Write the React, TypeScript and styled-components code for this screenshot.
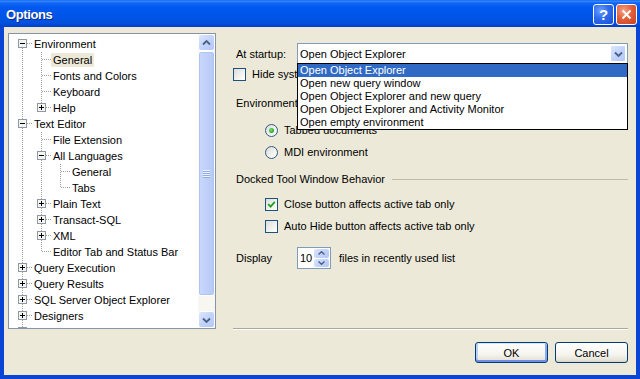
import React from "react";
import styled, { createGlobalStyle } from "styled-components";

const GlobalStyle = createGlobalStyle`
  html, body {
    margin: 0;
    padding: 0;
    background: #ece9d8;
  }
  body {
    font-family: "Liberation Sans", Arial, sans-serif;
    font-size: 11px;
    color: #000;
  }
`;

const Window = styled.div`
  width: 640px;
  height: 379px;
  display: flex;
  flex-direction: column;
  background: #ece9d8;
  overflow: hidden;
`;

const TitleBar = styled.div`
  height: 27px;
  flex-shrink: 0;
  display: flex;
  align-items: center;
  padding: 0 3px 0 6px;
  background: linear-gradient(
    to bottom,
    #0a5fe9 0%,
    #3a8cff 4%,
    #1468f5 10%,
    #0058ee 28%,
    #0055e8 60%,
    #0150de 85%,
    #0040c6 100%
  );
`;

const Title = styled.div`
  flex: 1;
  padding-top: 2px;
  color: #fff;
  font-weight: bold;
  font-size: 13px;
  letter-spacing: -0.4px;
  text-shadow: 1px 1px #0f2a8a;
`;

const CaptionButtons = styled.div`
  display: flex;
  gap: 2px;
  margin-top: 1px;
`;

const CaptionButton = styled.div<{ $variant: "help" | "close" }>`
  width: 21px;
  height: 21px;
  box-sizing: border-box;
  border: 1px solid #fff;
  border-radius: 3px;
  display: flex;
  align-items: center;
  justify-content: center;
  color: #fff;
  font-weight: bold;
  font-size: 15px;
  background: ${(p) =>
    p.$variant === "help"
      ? "radial-gradient(circle at 35% 30%, #6ea0ff 0%, #2e6cec 45%, #1a4fd6 100%)"
      : "radial-gradient(circle at 35% 30%, #f2a488 0%, #e2603a 45%, #c8401c 100%)"};
`;

const Client = styled.div`
  flex: 1;
  display: flex;
  padding: 6px 8px 12px 4px;
  border: 4px solid #0a46d6;
  border-top: 0;
`;

/* ---------- tree ---------- */

const TreeBox = styled.div`
  width: 208px;
  height: 296px;
  box-sizing: border-box;
  flex-shrink: 0;
  border: 1px solid #8595a8;
  background: #fff;
  display: flex;
`;

const TreeList = styled.div`
  flex: 1;
  padding: 2px 0 0 4px;
  overflow: hidden;
`;

const TreeRow = styled.div`
  display: flex;
  align-items: center;
  height: 16px;
  white-space: nowrap;
`;

const TreeLabel = styled.span<{ $selected?: boolean }>`
  height: 14px;
  line-height: 14px;
  padding: 0 2px;
  background: ${(p) => (p.$selected ? "#ece9d8" : "transparent")};
`;

const ScrollBar = styled.div`
  width: 17px;
  display: flex;
  flex-direction: column;
  background: #f7f6f1;
`;

const ScrollArrow = styled.div`
  height: 17px;
  box-sizing: border-box;
  border: 1px solid #fff;
  border-radius: 3px;
  display: flex;
  align-items: center;
  justify-content: center;
  background: linear-gradient(135deg, #dce6fd 0%, #c3d4fb 50%, #b3c7f5 100%);
`;

const ScrollThumb = styled.div`
  height: 245px;
  box-sizing: border-box;
  border: 1px solid #fff;
  border-radius: 3px;
  display: flex;
  align-items: center;
  justify-content: center;
  background: linear-gradient(to right, #c9d8fc 0%, #bfd0fa 50%, #b6c9f6 100%);
  box-shadow: inset 0 0 0 1px #b0c4f2;
`;

const Grip = styled.div`
  width: 7px;
  height: 8px;
  background: repeating-linear-gradient(
    to bottom,
    #eef3fe 0 1px,
    #8faae8 1px 2px
  );
`;

const ScrollTrack = styled.div`
  flex: 1;
`;

/* ---------- right side ---------- */

const Panel = styled.div`
  flex: 1;
  margin-left: 17px;
  display: flex;
  flex-direction: column;
`;

const FieldRow = styled.div<{ $top: number; $height?: number }>`
  display: flex;
  align-items: center;
  height: ${(p) => p.$height ?? 16}px;
  margin-top: ${(p) => p.$top}px;
`;

const FieldLabel = styled.div`
  width: 64px;
  box-sizing: border-box;
  padding-left: 3px;
  flex-shrink: 0;
`;

const OptionRow = styled.div<{ $top: number; $indent?: number }>`
  display: flex;
  align-items: center;
  gap: 6px;
  height: 16px;
  margin-top: ${(p) => p.$top}px;
  padding-left: ${(p) => p.$indent ?? 0}px;
  white-space: nowrap;
`;

const ComboBox = styled.div`
  position: relative;
  width: 331px;
  height: 21px;
  box-sizing: border-box;
  border: 1px solid #7f9db9;
  background: #fff;
  display: flex;
  align-items: center;
`;

const ComboText = styled.div`
  flex: 1;
  padding-left: 2px;
`;

const ComboArrow = styled.div`
  width: 16px;
  height: 17px;
  margin-right: 1px;
  box-sizing: border-box;
  border: 1px solid #fff;
  border-radius: 2px;
  display: flex;
  align-items: center;
  justify-content: center;
  background: linear-gradient(135deg, #dce6fd 0%, #c3d4fb 50%, #b3c7f5 100%);
`;

const DropList = styled.div`
  position: absolute;
  top: 19px;
  left: -1px;
  right: -1px;
  z-index: 5;
  border: 1px solid #000;
  background: #fff;
`;

const DropItem = styled.div<{ $active?: boolean }>`
  height: 13px;
  line-height: 13px;
  padding-left: 2px;
  background: ${(p) => (p.$active ? "#316ac5" : "#fff")};
  color: ${(p) => (p.$active ? "#fff" : "#000")};
`;

const CheckBox = styled.span`
  width: 13px;
  height: 13px;
  box-sizing: border-box;
  flex-shrink: 0;
  border: 1px solid #1c5180;
  display: flex;
  align-items: center;
  justify-content: center;
  background: linear-gradient(135deg, #dcdcd7 0%, #f6f6f3 70%, #fff 100%);
`;

const Radio = styled.span`
  width: 13px;
  height: 13px;
  box-sizing: border-box;
  flex-shrink: 0;
  border: 1px solid #2f5a86;
  border-radius: 50%;
  display: flex;
  align-items: center;
  justify-content: center;
  background: linear-gradient(135deg, #dcdcd7 0%, #f6f6f3 70%, #fff 100%);
`;

const RadioDot = styled.span`
  width: 5px;
  height: 5px;
  border-radius: 50%;
  background: radial-gradient(circle at 40% 40%, #7fdc7f 0%, #2fae2f 60%, #1f8f1f 100%);
`;

const GroupHeader = styled.div<{ $top: number }>`
  display: flex;
  align-items: center;
  height: 16px;
  margin-top: ${(p) => p.$top}px;
  padding-left: 3px;
  white-space: nowrap;
`;

const Rule = styled.div`
  flex: 1;
  height: 1px;
  margin-left: 7px;
  background: #bcbaad;
`;

const SpinBox = styled.div`
  width: 34px;
  height: 22px;
  box-sizing: border-box;
  border: 1px solid #7f9db9;
  background: #fff;
  display: flex;
`;

const SpinValue = styled.div`
  flex: 1;
  padding-left: 2px;
  line-height: 20px;
`;

const SpinButtons = styled.div`
  width: 15px;
  display: flex;
  flex-direction: column;
  gap: 1px;
  padding: 1px 1px 1px 0;
`;

const SpinButton = styled.div`
  flex: 1;
  border-radius: 2px;
  display: flex;
  align-items: center;
  justify-content: center;
  background: linear-gradient(135deg, #dce6fd 0%, #c3d4fb 50%, #b3c7f5 100%);
`;

const FilesText = styled.span`
  margin-left: 8px;
`;

const Spacer = styled.div`
  flex: 1;
`;

const Separator = styled.div`
  border-top: 1px solid #aca899;
  border-bottom: 1px solid #fff;
`;

const ButtonRow = styled.div`
  display: flex;
  justify-content: flex-end;
  gap: 7px;
  margin-top: 12px;
`;

const PushButton = styled.div<{ $default?: boolean }>`
  width: 73px;
  height: 21px;
  box-sizing: border-box;
  border: 1px solid #003c74;
  border-radius: 3px;
  display: flex;
  align-items: center;
  justify-content: center;
  background: linear-gradient(to bottom, #ffffff 0%, #f5f4ee 60%, #e6e3d8 90%, #d6d0c5 100%);
  box-shadow: ${(p) =>
    p.$default
      ? "inset 0 1px 0 #cee7ff, inset 0 -2px 0 #6f8ee6, inset 2px 0 0 #b8d0f9, inset -2px 0 0 #8ba9ee"
      : "none"};
`;

/* ---------- drawings ---------- */

const DOT = "#a0a0a0";

type Exp = "+" | "-" | undefined;

const Guide: React.FC<{ on: boolean }> = ({ on }) => (
  <svg width="19" height="16" style={{ flexShrink: 0 }}>
    {on && <line x1="9.5" y1="0" x2="9.5" y2="16" stroke={DOT} strokeDasharray="1 1" />}
  </svg>
);

const Connector: React.FC<{ top: boolean; bottom: boolean; exp: Exp }> = ({ top, bottom, exp }) => (
  <svg width="19" height="16" style={{ flexShrink: 0 }}>
    {top && <line x1="9.5" y1="0" x2="9.5" y2="8" stroke={DOT} strokeDasharray="1 1" />}
    {bottom && <line x1="9.5" y1="8" x2="9.5" y2="16" stroke={DOT} strokeDasharray="1 1" />}
    <line x1="10" y1="7.5" x2="19" y2="7.5" stroke={DOT} strokeDasharray="1 1" />
    {exp && (
      <>
        <rect x="5.5" y="3.5" width="8" height="8" fill="#f5f4ef" stroke="#8c9aa8" />
        <line x1="7" y1="7.5" x2="12" y2="7.5" stroke="#000" />
        {exp === "+" && <line x1="9.5" y1="5" x2="9.5" y2="10" stroke="#000" />}
      </>
    )}
  </svg>
);

const Chevron: React.FC<{ dir: "up" | "down"; w?: number }> = ({ dir, w = 8 }) => (
  <svg width={w + 1} height="6">
    <path
      d={dir === "up" ? `M1 4.5 L${(w + 1) / 2} 1 L${w} 4.5` : `M1 1.5 L${(w + 1) / 2} 5 L${w} 1.5`}
      fill="none"
      stroke="#4d6185"
      strokeWidth="1.8"
    />
  </svg>
);

const SmallArrow: React.FC<{ dir: "up" | "down" }> = ({ dir }) => (
  <svg width="7" height="4">
    <path
      d={dir === "up" ? "M0.5 3.5 L3.5 0.7 L6.5 3.5" : "M0.5 0.5 L3.5 3.3 L6.5 0.5"}
      fill="none"
      stroke="#4d6185"
      strokeWidth="1.4"
    />
  </svg>
);

const CheckMark = () => (
  <svg width="9" height="9">
    <path d="M1.2 4.2 L3.6 6.6 L7.8 1.8" fill="none" stroke="#21a121" strokeWidth="1.8" />
  </svg>
);

/* ---------- data ---------- */

type Node = {
  label: string;
  guides: boolean[];
  top: boolean;
  bottom: boolean;
  exp?: Exp;
  selected?: boolean;
};

const tree: Node[] = [
  { label: "Environment", guides: [], top: false, bottom: true, exp: "-" },
  { label: "General", guides: [true], top: true, bottom: true, selected: true },
  { label: "Fonts and Colors", guides: [true], top: true, bottom: true },
  { label: "Keyboard", guides: [true], top: true, bottom: true },
  { label: "Help", guides: [true], top: true, bottom: false, exp: "+" },
  { label: "Text Editor", guides: [], top: true, bottom: true, exp: "-" },
  { label: "File Extension", guides: [true], top: true, bottom: true },
  { label: "All Languages", guides: [true], top: true, bottom: true, exp: "-" },
  { label: "General", guides: [true, true], top: true, bottom: true },
  { label: "Tabs", guides: [true, true], top: true, bottom: false },
  { label: "Plain Text", guides: [true], top: true, bottom: true, exp: "+" },
  { label: "Transact-SQL", guides: [true], top: true, bottom: true, exp: "+" },
  { label: "XML", guides: [true], top: true, bottom: true, exp: "+" },
  { label: "Editor Tab and Status Bar", guides: [true], top: true, bottom: false },
  { label: "Query Execution", guides: [], top: true, bottom: true, exp: "+" },
  { label: "Query Results", guides: [], top: true, bottom: true, exp: "+" },
  { label: "SQL Server Object Explorer", guides: [], top: true, bottom: true, exp: "+" },
  { label: "Designers", guides: [], top: true, bottom: true, exp: "+" },
  { label: "Source Control", guides: [], top: true, bottom: true, exp: "+" },
];

const startupOptions = [
  "Open Object Explorer",
  "Open new query window",
  "Open Object Explorer and new query",
  "Open Object Explorer and Activity Monitor",
  "Open empty environment",
];

export default function App() {
  return (
    <>
      <GlobalStyle />
      <Window>
        <TitleBar>
          <Title>Options</Title>
          <CaptionButtons>
            <CaptionButton $variant="help">?</CaptionButton>
            <CaptionButton $variant="close">
              <svg width="11" height="11">
                <path d="M1.5 1.5 L9.5 9.5 M9.5 1.5 L1.5 9.5" stroke="#fff" strokeWidth="2" />
              </svg>
            </CaptionButton>
          </CaptionButtons>
        </TitleBar>

        <Client>
          <TreeBox>
            <TreeList>
              {tree.map((n, i) => (
                <TreeRow key={i}>
                  {n.guides.map((g, j) => (
                    <Guide key={j} on={g} />
                  ))}
                  <Connector top={n.top} bottom={n.bottom} exp={n.exp} />
                  <TreeLabel $selected={n.selected}>{n.label}</TreeLabel>
                </TreeRow>
              ))}
            </TreeList>
            <ScrollBar>
              <ScrollArrow>
                <Chevron dir="up" />
              </ScrollArrow>
              <ScrollThumb>
                <Grip />
              </ScrollThumb>
              <ScrollTrack />
              <ScrollArrow>
                <Chevron dir="down" />
              </ScrollArrow>
            </ScrollBar>
          </TreeBox>

          <Panel>
            <FieldRow $top={10} $height={21}>
              <FieldLabel>At startup:</FieldLabel>
              <ComboBox>
                <ComboText>Open Object Explorer</ComboText>
                <ComboArrow>
                  <Chevron dir="down" />
                </ComboArrow>
                <DropList>
                  {startupOptions.map((o, i) => (
                    <DropItem key={o} $active={i === 0}>
                      {o}
                    </DropItem>
                  ))}
                </DropList>
              </ComboBox>
            </FieldRow>

            <OptionRow $top={2}>
              <CheckBox />
              <span>Hide system objects in Object Explorer</span>
            </OptionRow>

            <GroupHeader $top={13}>
              Environment layout
              <Rule />
            </GroupHeader>

            <OptionRow $top={11} $indent={32}>
              <Radio>
                <RadioDot />
              </Radio>
              <span>Tabbed documents</span>
            </OptionRow>
            <OptionRow $top={6} $indent={32}>
              <Radio />
              <span>MDI environment</span>
            </OptionRow>

            <GroupHeader $top={11}>
              Docked Tool Window Behavior
              <Rule />
            </GroupHeader>

            <OptionRow $top={9} $indent={32}>
              <CheckBox>
                <CheckMark />
              </CheckBox>
              <span>Close button affects active tab only</span>
            </OptionRow>
            <OptionRow $top={6} $indent={32}>
              <CheckBox />
              <span>Auto Hide button affects active tab only</span>
            </OptionRow>

            <FieldRow $top={13} $height={22}>
              <FieldLabel>Display</FieldLabel>
              <SpinBox>
                <SpinValue>10</SpinValue>
                <SpinButtons>
                  <SpinButton>
                    <SmallArrow dir="up" />
                  </SpinButton>
                  <SpinButton>
                    <SmallArrow dir="down" />
                  </SpinButton>
                </SpinButtons>
              </SpinBox>
              <FilesText>files in recently used list</FilesText>
            </FieldRow>

            <Spacer />
            <Separator />
            <ButtonRow>
              <PushButton $default>OK</PushButton>
              <PushButton>Cancel</PushButton>
            </ButtonRow>
          </Panel>
        </Client>
      </Window>
    </>
  );
}
